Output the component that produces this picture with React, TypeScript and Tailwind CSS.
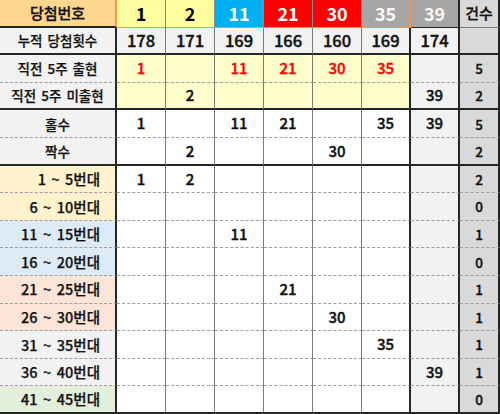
import React from "react";

// 당첨번호별 구간 통계표
const header = ["1", "2", "11", "21", "30", "35", "39"];

interface Row {
  label: string;
  cells: string[];
  count: string;
  kind: "sum" | "recent" | "plain" | "range";
  labelBg?: string;
  red?: boolean;
}

const rows: Row[] = [
  { label: "누적 당첨횟수", cells: ["178", "171", "169", "166", "160", "169", "174"], count: "", kind: "sum" },
  { label: "직전 5주 출현", cells: ["1", "", "11", "21", "30", "35", ""], count: "5", kind: "recent", red: true },
  { label: "직전 5주 미출현", cells: ["", "2", "", "", "", "", "39"], count: "2", kind: "recent" },
  { label: "홀수", cells: ["1", "", "11", "21", "", "35", "39"], count: "5", kind: "plain" },
  { label: "짝수", cells: ["", "2", "", "", "30", "", ""], count: "2", kind: "plain" },
  { label: "1 ~ 5번대", cells: ["1", "2", "", "", "", "", ""], count: "2", kind: "range", labelBg: "bg-[#fff2cc]" },
  { label: "6 ~ 10번대", cells: ["", "", "", "", "", "", ""], count: "0", kind: "range", labelBg: "bg-[#fff2cc]" },
  { label: "11 ~ 15번대", cells: ["", "", "11", "", "", "", ""], count: "1", kind: "range", labelBg: "bg-[#ddebf7]" },
  { label: "16 ~ 20번대", cells: ["", "", "", "", "", "", ""], count: "0", kind: "range", labelBg: "bg-[#ddebf7]" },
  { label: "21 ~ 25번대", cells: ["", "", "", "21", "", "", ""], count: "1", kind: "range", labelBg: "bg-[#fce4d6]" },
  { label: "26 ~ 30번대", cells: ["", "", "", "", "30", "", ""], count: "1", kind: "range", labelBg: "bg-[#fce4d6]" },
  { label: "31 ~ 35번대", cells: ["", "", "", "", "", "35", ""], count: "1", kind: "range", labelBg: "bg-[#f2f2f2]" },
  { label: "36 ~ 40번대", cells: ["", "", "", "", "", "", "39"], count: "1", kind: "range", labelBg: "bg-[#f2f2f2]" },
  { label: "41 ~ 45번대", cells: ["", "", "", "", "", "", ""], count: "0", kind: "range", labelBg: "bg-[#e2efda]" },
];

const headerBg = [
  "bg-[#ffff9f] text-black",
  "bg-[#ffff9f] text-black",
  "bg-[#00b0f0] text-white",
  "bg-[#ff0000] text-white",
  "bg-[#ff0000] text-white",
  "bg-[#a6a6a6] text-[#f7f7f7]",
  "bg-[#a6a6a6] text-[#f7f7f7]",
];

// 구간 경계: 누적, 미출현, 짝수, 마지막 줄 아래는 굵은 선
const thickAfter = [0, 2, 4, 13];

function bottom(i: number) {
  return thickAfter.includes(i)
    ? "border-b-2 border-b-[#262626]"
    : "border-b border-b-[#9c9c9c] [border-bottom-style:dashed]";
}

function right(c: number) {
  if (c === 0) return "border-r-2 border-r-[#262626]";
  if (c >= 6) return "border-r-2 border-r-[#262626]";
  return "border-r border-r-[#7a7a7a]";
}

function cellBg(kind: Row["kind"], c: number) {
  if (c === 6) return "bg-[#f2f2f2]";
  if (kind === "sum") return "bg-[#f2f2f2]";
  if (kind === "recent") return "bg-[#ffffcc]";
  return "bg-white";
}

export default function App() {
  return (
    <div className="w-[500px] h-[414px] bg-white font-['Noto_Sans_CJK_KR','Noto_Sans',sans-serif] text-[#111]">
      <div className="grid h-full grid-cols-[117px_repeat(7,49px)_40px] grid-rows-[repeat(15,minmax(0,1fr))]">
        {/* 머리줄 */}
        <div className="flex items-center justify-center bg-[#fdd68f] border-b-2 border-b-[#262626] border-r-2 border-r-[#f79646] text-[15px] font-medium [-webkit-text-stroke:0.3px]">
          당첨번호
        </div>
        {header.map((n, c) => (
          <div
            key={n}
            className={`flex items-center justify-center text-[18px] font-semibold ${headerBg[c]} ${
              c === 6 ? "border-b border-b-[#262626]" : "border-b border-b-[#f79646]"
            } ${c === 5 ? "border-r-2 border-r-[#f79646]" : c === 6 ? "border-r-2 border-r-[#262626]" : "border-r border-r-[#8a8a8a]"}`}
          >
            {n}
          </div>
        ))}
        <div className="flex items-center justify-center bg-[#d9d9d9] border-b border-b-[#7a7a7a] border-r-2 border-r-[#262626] text-[15px] font-medium [-webkit-text-stroke:0.3px]">
          건수
        </div>

        {rows.map((row, i) => (
          <React.Fragment key={row.label}>
            <div
              className={`flex items-center [word-spacing:0.15em] [-webkit-text-stroke:0.25px] ${bottom(i)} ${right(0)} ${
                row.kind === "range"
                  ? `justify-end pr-[15px] text-[14.5px] ${row.labelBg}`
                  : "justify-center bg-[#f2f2f2] text-[13.5px]"
              } font-medium`}
            >
              {row.label}
            </div>
            {row.cells.map((v, c) => (
              <div
                key={c}
                className={`flex items-center justify-center [-webkit-text-stroke:0.4px] ${bottom(i)} ${right(c + 1)} ${cellBg(row.kind, c)} ${
                  row.kind === "sum" ? "text-[16.5px]" : "text-[15px]"
                } font-medium ${row.red ? "text-[#ff0000]" : ""}`}
              >
                {v}
              </div>
            ))}
            <div
              className={`flex items-center justify-center bg-[#d9d9d9] ${bottom(i)} border-r-2 border-r-[#262626] text-[13.5px] font-medium [-webkit-text-stroke:0.35px]`}
            >
              {row.count}
            </div>
          </React.Fragment>
        ))}
      </div>
    </div>
  );
}
